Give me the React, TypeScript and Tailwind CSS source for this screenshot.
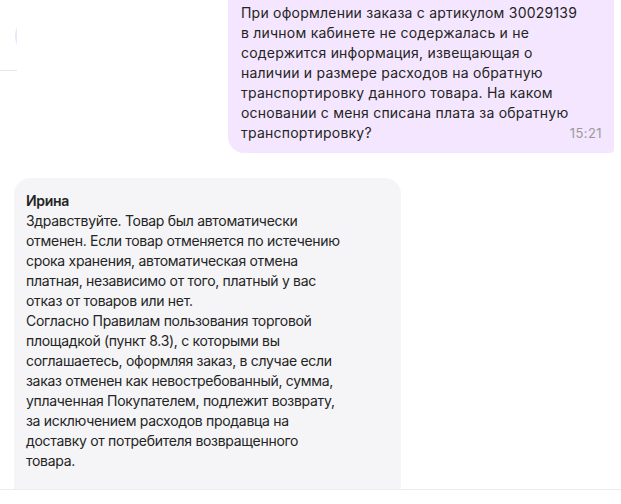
import React from "react";

const mine = [
  "При оформлении заказа с артикулом 30029139",
  "в личном кабинете не содержалась и не",
  "содержится информация, извещающая о",
  "наличии и размере расходов на обратную",
  "транспортировку данного товара. На каком",
  "основании с меня списана плата за обратную",
];

const reply = [
  "Здравствуйте. Товар был автоматически",
  "отменен. Если товар отменяется по истечению",
  "срока хранения, автоматическая отмена",
  "платная, независимо от того, платный у вас",
  "отказ от товаров или нет.",
  "Согласно Правилам пользования торговой",
  "площадкой (пункт 8.3), с которыми вы",
  "соглашаетесь, оформляя заказ, в случае если",
  "заказ отменен как невостребованный, сумма,",
  "уплаченная Покупателем, подлежит возврату,",
  "за исключением расходов продавца на",
  "доставку от потребителя возвращенного",
  "товара.",
];

export default function App() {
  return (
    <div
      className="relative w-[621px] h-[504px] bg-white overflow-hidden text-[#242424] text-[14px] leading-[20px]"
      style={{ fontFamily: "Inter, 'Noto Sans', sans-serif" }}
    >
      <div className="h-[490px] overflow-hidden border-b border-[#ececec] flex flex-col pl-[14px] pr-[7px]">
        <div className="ml-auto w-[386px] bg-[#f4e6fe] rounded-bl-[16px] rounded-br-[4px] pt-[3px] pb-[10px] pl-[13px] pr-[12px] tracking-[0.22px]">
          {mine.map((l) => (
            <div key={l} className="whitespace-nowrap">{l}</div>
          ))}
          <div className="flex justify-between">
            <span>транспортировку?</span>
            <span className="text-[13px] text-[#9a9a9a] tracking-[0.4px]">15:21</span>
          </div>
        </div>
        <div className="mt-[25px] w-[387px] bg-[#f5f5f7] rounded-t-[16px] pt-[13px] pl-[12px] pr-[12px] pb-[40px] tracking-[-0.3px]">
          <div className="font-semibold">Ирина</div>
          {reply.map((l) => (
            <div key={l} className="whitespace-nowrap">{l}</div>
          ))}
        </div>
      </div>
      <div className="absolute left-0 top-0 w-[17px] h-[71px] overflow-hidden border-b border-[#e8e6ee]">
        <div className="absolute left-[15px] top-[16px] w-[40px] h-[40px] rounded-full bg-[#efe3fc]" />
      </div>
    </div>
  );
}
